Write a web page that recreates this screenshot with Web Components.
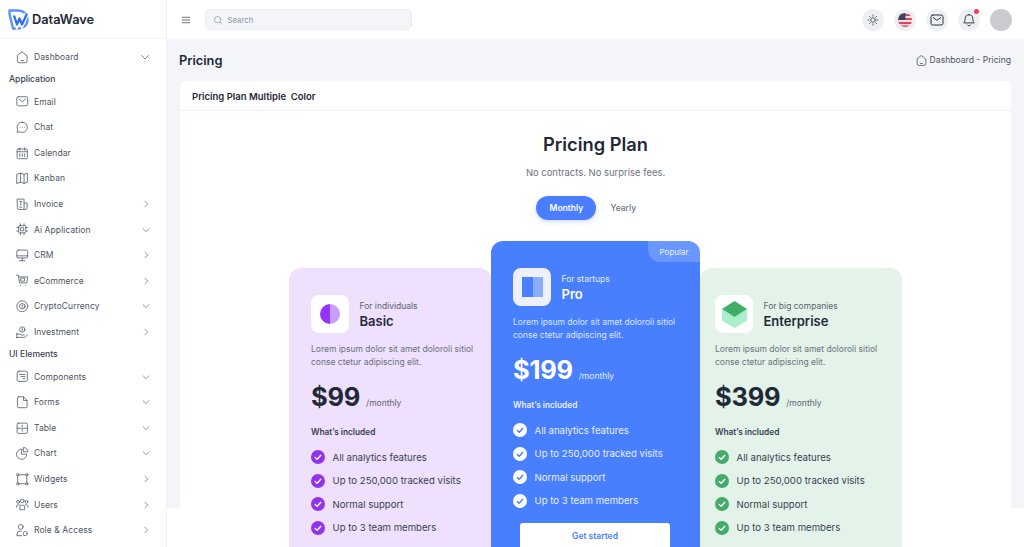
<!DOCTYPE html>
<html lang="en"><head><meta charset="utf-8"><title>DataWave Pricing</title>
<style>
html,body{margin:0;padding:0;height:547px;overflow:hidden;background:#fff;font-family:Inter,"Liberation Sans",sans-serif}
</style></head>
<body>
<dw-app></dw-app>
<script>
const P={
home:'<path d="M12 3.2 20 9.6V18a3 3 0 0 1-3 3H7a3 3 0 0 1-3-3V9.6Z"/><path d="M10 17.4h4"/>',
mail:'<rect x="3" y="4.5" width="18" height="15" rx="2.5"/><path d="m6.5 8.5 5.5 4 5.5-4"/>',
chat:'<path d="M12 3.5a8.5 8.5 0 1 1-3.6 16.2L3.5 20.5l1-4.2A8.5 8.5 0 0 1 12 3.5Z"/><path d="M8.4 12h.01M12 12h.01M15.6 12h.01"/>',
cal:'<rect x="3.5" y="5" width="17" height="16" rx="2"/><path d="M3.5 9.5h17M8 3v4M16 3v4M8 13v4.5M12 13v4.5M16 13v4.5"/>',
map:'<path d="M3.5 5.5 9 3.5l6 2 5.500-2v15l-5.500 2-6-2-5.500 2Z"/><path d="M9 3.500v15M15 5.500v15"/>',
inv:'<path d="M4 3.500h11v17H6a2 2 0 0 1-2-2Z"/><path d="M15 10h5v8.500a2 2 0 0 1-2 2h-3M8 7.500h3M9.500 7.500v6M8 17h3"/>',
cpu:'<rect x="6" y="6" width="12" height="12" rx="2"/><rect x="9.500" y="9.500" width="5" height="5"/><path d="M9 3v3M15 3v3M9 18v3M15 18v3M3 9h3M3 15h3M18 9h3M18 15h3"/>',
mon:'<rect x="3" y="3.500" width="18" height="13" rx="2"/><path d="M3 13h18M12 16.500V21M7.500 21h9"/>',
cart:'<path d="M2.500 3.500h3l2 13h12l1.500-10H6"/><rect x="10" y="8.500" width="6" height="5"/><path d="M9 20.500h.01M18 20.500h.01"/>',
coin:'<circle cx="12" cy="12" r="9"/><circle cx="12" cy="12" r="4.500"/><path d="M12 10v4"/>',
invest:'<circle cx="12" cy="7.500" r="4.500"/><path d="M12 5.500v4M3 15h5l3 1.500h4.500M3 20.500h13l5-4.500M3 14v7.500"/>',
comp:'<rect x="3.500" y="3.500" width="17" height="17" rx="3"/><path d="M7.500 9h9M10 12.500h6.500M13 16h3.500"/>',
form:'<path d="M6 3h8l6 6v10a2 2 0 0 1-2 2H6a2 2 0 0 1-2-2V5a2 2 0 0 1 2-2Z"/><path d="M14 3v6h6"/>',
table:'<rect x="3.500" y="3.500" width="17" height="17" rx="2"/><path d="M3.500 12h17M12 7v2.500M12 14.500V17"/>',
pie:'<path d="M11 5a8.500 8.500 0 1 0 8.500 8.500H11Z"/><path d="M14.500 2.500a7 7 0 0 1 7 7h-7Z"/>',
widget:'<path d="M6 4.500h12M6 19.500h12M4.500 6v12M19.500 6v12"/><circle cx="4.500" cy="4.500" r="2"/><circle cx="19.500" cy="4.500" r="2"/><circle cx="4.500" cy="19.500" r="2"/><circle cx="19.500" cy="19.500" r="2"/>',
users:'<circle cx="12" cy="6.500" r="3"/><circle cx="5" cy="8" r="2.300"/><circle cx="19" cy="8" r="2.300"/><path d="M8 20.500v-4a3 3 0 0 1 3-3h2a3 3 0 0 1 3 3v4ZM2.500 17v-1.500A2.500 2.500 0 0 1 5 13h2M21.500 17v-1.500A2.500 2.500 0 0 0 19 13h-2"/>',
role:'<circle cx="9.500" cy="6.500" r="4"/><path d="M3.500 21v-3a4.500 4.500 0 0 1 4.500-4.500h2.500"/><circle cx="17" cy="17.500" r="3.500"/><path d="M3.500 21H11"/>',
down:'<path d="m5 9 7 7 7-7"/>',right:'<path d="m9 5 7 7-7 7"/>',
menu:'<path d="M3 5.500h18M3 12h18M3 18.500h18"/>',
search:'<circle cx="11" cy="11" r="7.500"/><path d="m17 17 4.500 4.500"/>',
sun:'<circle cx="12" cy="12" r="4.500"/><path d="M12 2v2.500M12 19.500V22M2 12h2.500M19.500 12H22M4.900 4.900l1.800 1.800M17.300 17.300l1.800 1.800M4.900 19.100l1.800-1.800M17.300 6.700l1.800-1.800"/>',
bell:'<path d="M12 3a6.500 6.500 0 0 0-6.500 6.500c0 5-2.500 7.500-2.500 7.500h18s-2.500-2.500-2.500-7.500A6.500 6.500 0 0 0 12 3Z"/><path d="M9.500 20.500a2.800 2.800 0 0 0 5 0"/>'
};
function svg(n,s,w,c){return `<svg width="${s}" height="${s}" viewBox="0 0 24 24" fill="none" stroke="${c||'currentColor'}" stroke-width="${w||1.500}" stroke-linecap="round" stroke-linejoin="round" aria-hidden="true">${P[n]}</svg>`}
function def(name,css,render){customElements.define(name,class extends HTMLElement{connectedCallback(){if(this.shadowRoot)return;const r=this.attachShadow({mode:'open'});r.innerHTML=`<style>${css}</style>`+render(this);}})}

def('dw-nav-item',`:host{display:flex;align-items:center;height:25.600px;padding:0 16px;color:#4b5563;font-size:8.500px;letter-spacing:.01em}
.i{width:12px;height:12px;display:flex;align-items:center;justify-content:center;color:#586272}.i svg{flex:none}.t{margin-left:6px;flex:1;white-space:nowrap}.c{width:10px;height:10px;display:flex;color:#6b7280;margin-right:-1px}
:host([big]) .c{width:12px;height:12px;margin-right:-1px}`,
e=>{const c=e.getAttribute('chev');return `<span class="i">${svg(e.getAttribute('icon'),14.500,1.400)}</span><span class="t"><slot></slot></span>${c?`<span class="c">${svg(c,e.hasAttribute('big')?12:10,1.800)}</span>`:''}`});

def('dw-nav-label',`:host{display:flex;align-items:center;height:19.200px;padding-left:9px;font-size:8.600px;font-weight:500;color:#374151}`,()=>'<slot></slot>');

def('dw-logo',`:host{display:flex;align-items:center;height:38px;padding-left:8px;gap:3px;border-bottom:1px solid #f0f2f6;font-size:12.800px;font-weight:600;color:#1f2937}`,
()=>`<svg width="21" height="21" viewBox="0 0 21 21" fill="none" aria-hidden="true"><path d="M1.500 1.500H10c5.500 0 9.500 3.500 9.500 9S15.500 19.500 10 19.500H5L1.500 5Z" stroke="#5b93f7" stroke-width="2.400" stroke-linejoin="round"/><path d="m6 6.500 3 9 2.500-6 2.500 6 5-11" stroke="#fff" stroke-width="4.500"/><path d="m6 6.500 3 9 2.500-6 2.500 6 5-11" stroke="#2f6fed" stroke-width="2.300" stroke-linejoin="round"/></svg><span>DataWave</span>`);

def('dw-sidebar',`:host{display:block;width:166px;height:547px;flex:none;background:#fff;border-right:1px solid #eef0f4;overflow:hidden}nav{padding-top:5px}`,
()=>{const it=(i,t,c,b)=>`<dw-nav-item icon="${i}" ${c?`chev="${c}"`:''} ${b?'big':''}>${t}</dw-nav-item>`;
return `<dw-logo></dw-logo><nav>`+it('home','Dashboard','down',1)+`<dw-nav-label>Application</dw-nav-label>`+
it('mail','Email')+it('chat','Chat')+it('cal','Calendar')+it('map','Kanban')+it('inv','Invoice','right')+it('cpu','Ai Application','down')+it('mon','CRM','right')+it('cart','eCommerce','right')+it('coin','CryptoCurrency','down')+it('invest','Investment','right')+
`<dw-nav-label>UI Elements</dw-nav-label>`+it('comp','Components','down')+it('form','Forms','down')+it('table','Table','down')+it('pie','Chart','down')+it('widget','Widgets','right')+it('users','Users','right')+it('role','Role &amp; Access','right')+`</nav>`});

def('dw-round-btn',`:host{display:flex;position:relative;width:22px;height:22px;border-radius:50%;background:#edeff3;align-items:center;justify-content:center;color:#374151}
:host([dot])::after{content:"";position:absolute;right:1.500px;top:0;width:5px;height:5px;border-radius:50%;background:#e5484d}`,()=>'<slot></slot>');

def('dw-topbar',`:host{display:flex;align-items:center;height:39px;flex:none;background:#fff;padding:0 12px 0 14px;box-sizing:border-box;color:#4b5563}
.m{display:flex;width:10px;margin-right:13.500px}
.s{display:flex;align-items:center;width:207px;height:21.500px;box-sizing:border-box;background:#f3f5f9;border:1px solid #e9ecf2;border-radius:5px;padding-left:7px;gap:5px;font-size:7.800px;color:#8a94a3}
.s svg{color:#8a94a3}.r{margin-left:auto;display:flex;gap:10px;align-items:center}
.a{width:22px;height:22px;border-radius:50%;background:#c9cbcf}`,
()=>`<span class="m">${svg('menu',10,2)}</span><div class="s">${svg('search',10,1.700)}<span>Search</span></div>
<div class="r"><dw-round-btn>${svg('sun',12,1.600)}</dw-round-btn><dw-round-btn><svg width="14" height="14" viewBox="0 0 14 14" aria-hidden="true"><defs><clipPath id="f"><circle cx="7" cy="7" r="7"/></clipPath></defs><g clip-path="url(#f)"><rect width="14" height="14" fill="#f5dfe2"/><path d="M0 1h14v2H0zM0 5h14v2H0zM0 9h14v2H0zM0 12.500h14V14H0z" fill="#d9475a"/><rect width="7.500" height="7" fill="#3d4266"/></g></svg></dw-round-btn><dw-round-btn>${svg('mail',16,1.500,'#2b3442')}</dw-round-btn><dw-round-btn dot>${svg('bell',14,1.600,'#2b3442')}</dw-round-btn><div class="a"></div></div>`);

def('dw-pagehead',`:host{display:flex;align-items:center;justify-content:space-between;height:42px;padding:0 13px 0 12px}
h1{margin:0;font-size:12.800px;font-weight:600;color:#1f2937}.b{display:flex;align-items:center;gap:2px;font-size:8.600px;color:#4b5563}`,
()=>`<h1>Pricing</h1><div class="b">${svg('home',13,1.500)}<span>Dashboard - Pricing</span></div>`);

def('dw-toggle',`:host{display:flex;align-items:center;justify-content:center;font-size:8.500px;font-weight:600}
.on{display:flex;align-items:center;justify-content:center;width:60px;height:23.500px;border-radius:12px;background:#4a7dff;color:#fff;box-shadow:0 2px 5px rgba(74,125,255,.25)}
.off{margin-left:14px;padding-right:18.500px;color:#6b7280;font-weight:500}`,()=>`<span class="on">Monthly</span><span class="off">Yearly</span>`);

def('dw-check',`:host{display:flex;width:14px;height:14px;flex:none;border-radius:50%;background:var(--check-bg);align-items:center;justify-content:center}`,
()=>`<svg width="8" height="8" viewBox="0 0 10 10" fill="none" stroke="var(--check-fg)" stroke-width="1.700" stroke-linecap="round" stroke-linejoin="round" aria-hidden="true"><path d="m1.500 5.500 2.500 2.300 4.500-5"/></svg>`);

def('dw-plan',`:host{display:block;box-sizing:border-box;flex:none;position:relative;height:320px;padding:27px 0 0 var(--pl);background:var(--bg);color:var(--fg);border-radius:12px 12px 0 0}
:host([lift]){margin-top:-27px;z-index:1}
.top{display:flex;align-items:center;gap:10.500px}.ic{width:38px;height:38px;border-radius:8px;background:var(--icbg);display:flex;align-items:center;justify-content:center;flex:none}
.for{font-size:8.500px;color:var(--mut);line-height:11px;white-space:nowrap;padding-top:2px}.nm{font-size:13px;font-weight:600;line-height:18px;margin-top:0}
.d{margin:9.500px 0 0;font-size:8.500px;line-height:13px;color:var(--mut2);white-space:nowrap}
.pr{display:flex;align-items:baseline;gap:6px;margin-top:9.500px;height:38px}.am{font-size:25.500px;font-weight:700;line-height:38px;letter-spacing:-.01em}.mo{font-size:8.500px;color:var(--mut)}
.w{font-size:8.300px;font-weight:600;margin-top:10px;line-height:13px;color:var(--inc)}
ul{list-style:none;margin:11px 0 0;padding:0;display:flex;flex-direction:column;gap:9.500px}li{display:flex;align-items:center;gap:7.600px;height:14px;font-size:9.600px;white-space:nowrap;color:var(--li)}
.pop{position:absolute;top:0;right:0;width:52px;height:21px;display:flex;align-items:center;justify-content:center;font-size:8px;color:#eaf0ff;background:rgba(255,255,255,.18);border-radius:0 12px 0 12px}
.btn{display:flex;align-items:center;justify-content:center;width:150px;height:40px;margin:15.500px 0 0 7px;background:#fff;border-radius:3px;color:#4a7dff;font-size:8.500px;font-weight:600;box-sizing:border-box;padding-bottom:14px}`,
e=>{const g=a=>e.getAttribute(a);const li=t=>`<li><dw-check></dw-check><span>${t}</span></li>`;
return `${e.hasAttribute('popular')?'<div class="pop">Popular</div>':''}<div class="top"><div class="ic"><slot name="icon"></slot></div><div><div class="for">${g('for')}</div><div class="nm">${g('name')}</div></div></div>
<p class="d">Lorem ipsum dolor sit amet doloroli sitiol<br>conse ctetur adipiscing elit.</p>
<div class="pr"><span class="am">${g('price')}</span><span class="mo">/monthly</span></div>
<div class="w">What’s included</div><ul>${li('All analytics features')+li('Up to 250,000 tracked visits')+li('Normal support')+li('Up to 3 team members')}</ul>
${e.hasAttribute('popular')?'<div class="btn">Get started</div>':''}`});

def('dw-card',`:host{display:block;margin:0 13px 0 13px;background:#fff;border-radius:6px 6px 0 0;height:470px;overflow:hidden}
.h{display:flex;align-items:center;padding:1px 0 0 12px;font-size:9.500px;font-weight:600;color:#1f2937;border-bottom:1px solid #eef0f4;white-space:pre;height:28px}
.hero{height:128px;box-sizing:border-box;text-align:center;padding-top:20px}h2{margin:0;font-size:18.300px;font-weight:600;line-height:26px;color:#1f2937}
p{margin:8.500px 0 0;font-size:9.450px;line-height:14px;color:#6b7280}
dw-toggle{margin-top:16.500px}
.row{display:flex;justify-content:center;margin-top:29px;width:100%}`,
()=>`<div class="h">Pricing Plan Multiple  Color</div><div class="hero"><h2>Pricing Plan</h2><p>No contracts. No surprise fees.</p><dw-toggle></dw-toggle></div><div class="row"><slot></slot></div>`);

def('dw-app',`:host{display:flex;width:1024px;height:547px;overflow:hidden}
main{flex:1;display:flex;flex-direction:column;min-width:0}.c{flex:1;background:linear-gradient(#f3f5f9 469px,#fff 469px)}`,
()=>`<dw-sidebar></dw-sidebar><main><dw-topbar></dw-topbar><div class="c"><dw-pagehead></dw-pagehead><dw-card>
<dw-plan style="width:202px;--pl:22px;--bg:#efe0fd;--fg:#1f2937;--mut:#5b6472;--mut2:#6b7280;--inc:#374151;--li:#374151;--icbg:#fff;--check-bg:#9333ea;--check-fg:#fff" for="For individuals" name="Basic" price="$99"><svg slot="icon" width="20" height="20" viewBox="0 0 20 20" aria-hidden="true"><path d="M10 0a10 10 0 0 0 0 20Z" fill="#9333fb"/><path d="M10 0a10 10 0 0 1 0 20Z" fill="#c89dff"/></svg></dw-plan>
<dw-plan lift popular style="width:209px;--pl:22px;--bg:#487fff;--fg:#fff;--mut:#e4ebff;--mut2:#dbe5ff;--inc:#e8eeff;--li:#e8eeff;--icbg:#eef1fd;--check-bg:#fff;--check-fg:#487fff" for="For startups" name="Pro" price="$199"><svg slot="icon" width="21" height="20" viewBox="0 0 21 20" aria-hidden="true"><rect width="11" height="20" fill="#487fff"/><rect x="11" width="10" height="20" fill="#8aadff"/></svg></dw-plan>
<dw-plan style="width:202px;--pl:15px;--bg:#e3f3e9;--fg:#1f2937;--mut:#5b6472;--mut2:#6b7280;--inc:#374151;--li:#374151;--icbg:#fff;--check-bg:#45ab6a;--check-fg:#fff" for="For big companies" name="Enterprise" price="$399"><svg slot="icon" width="25" height="27" viewBox="0 0 25 27" aria-hidden="true"><path d="M0 8 12.500 16 25 8V19.500L12.500 27 0 19.500Z" fill="#a8efca"/><path d="M12.500 0 25 8 12.500 16 0 8Z" fill="#3fae68"/></svg></dw-plan>
</dw-card></div></main>`);
</script>
</body></html>
